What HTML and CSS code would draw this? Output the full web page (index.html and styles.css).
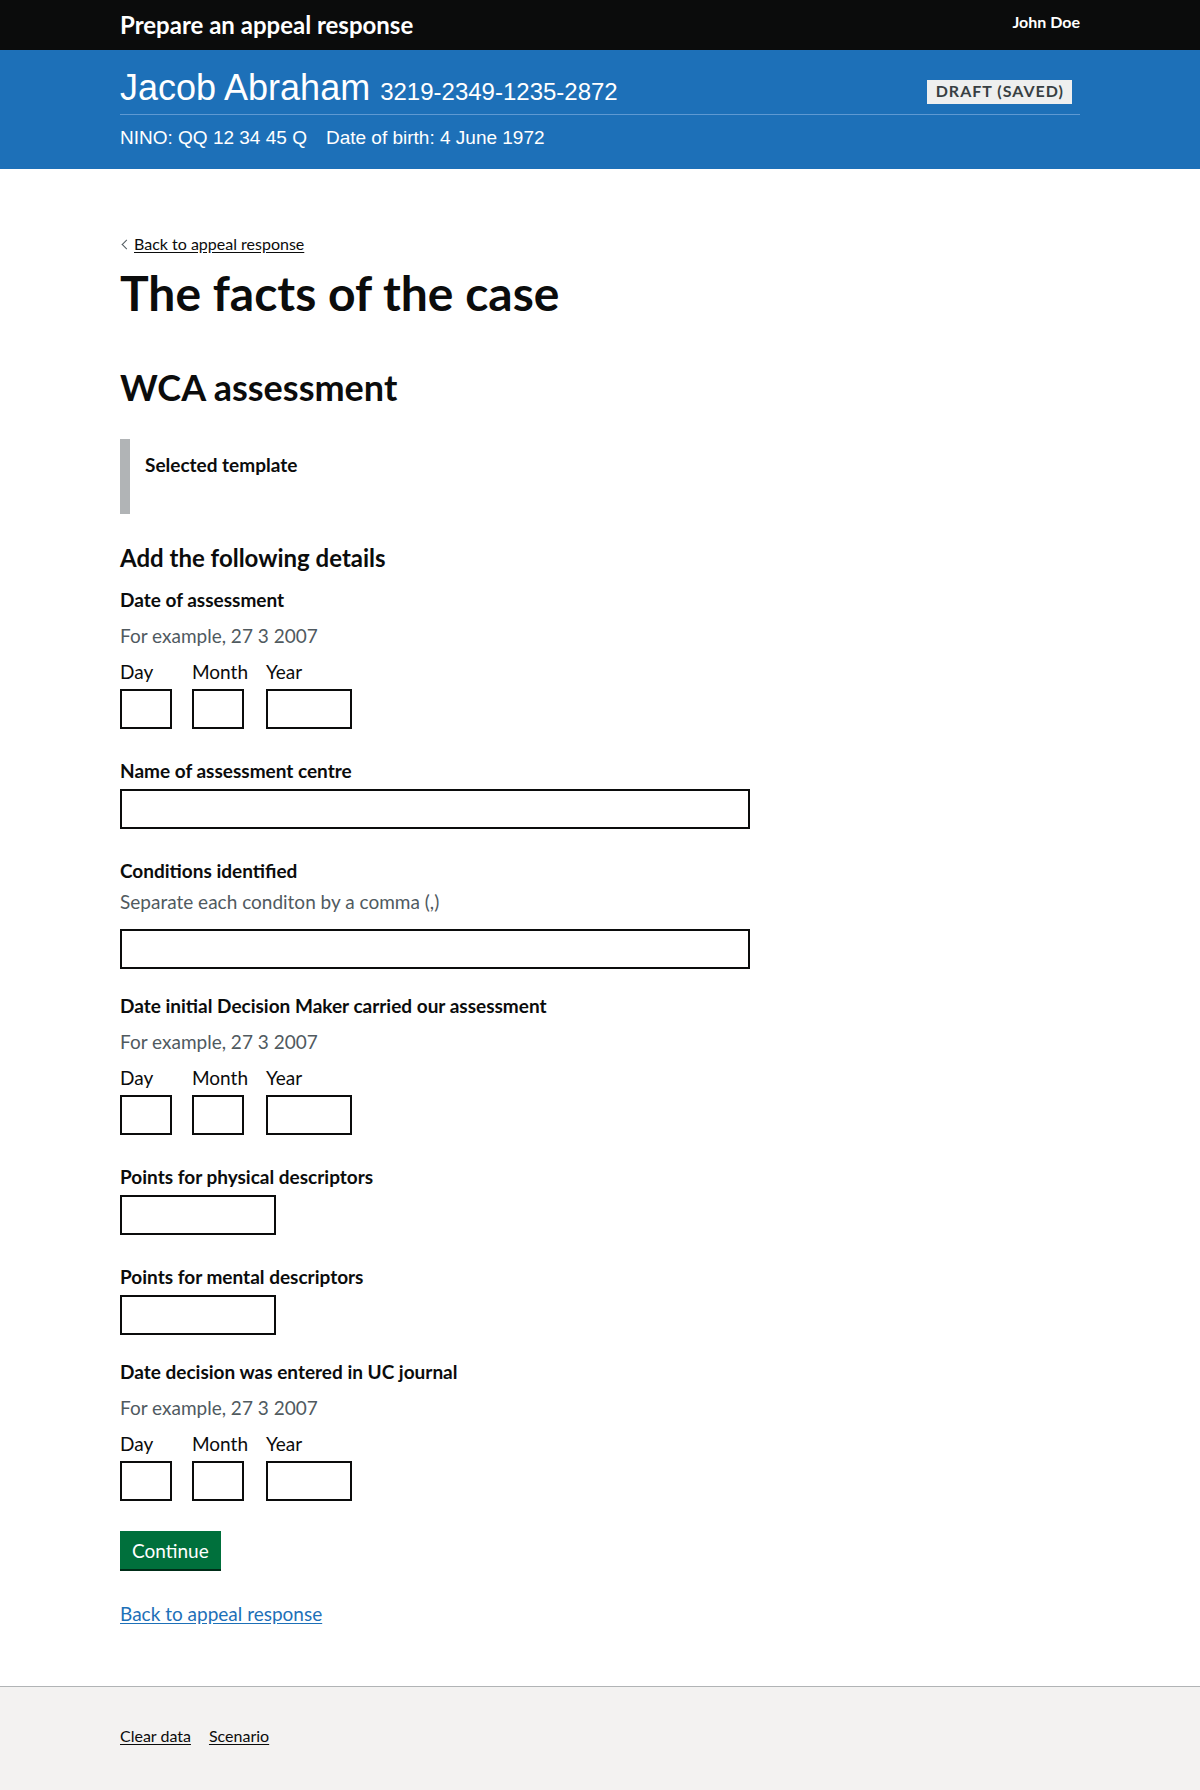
FILE: index.html
```html
<!DOCTYPE html>
<html lang="en">
<head>
<meta charset="utf-8">
<title>The facts of the case - Prepare an appeal response</title>
<link rel="stylesheet" href="styles.css">
</head>
<body>
<header class="site-header">
  <div class="container header-inner">
    <a class="service-name" href="#">Prepare an appeal response</a>
    <span class="user-name">John Doe</span>
  </div>
</header>

<div class="case-banner">
  <div class="container">
    <div class="case-top">
      <p class="claimant"><span class="claimant-name">Jacob Abraham</span> <span class="claimant-ref">3219-2349-1235-2872</span></p>
      <strong class="tag">Draft (saved)</strong>
    </div>
    <div class="case-meta">
      <span class="meta-item">NINO: QQ 12 34 45 Q</span>
      <span class="meta-item">Date of birth: 4 June 1972</span>
    </div>
  </div>
</div>

<main class="container main">
  <div class="back-wrap"><a class="back-link" href="#">Back to appeal response</a></div>
  <h1 class="heading-xl">The facts of the case</h1>
  <h2 class="heading-l">WCA assessment</h2>

  <div class="inset">
    <h3 class="heading-s">Selected template</h3>
  </div>

  <h2 class="heading-m">Add the following details</h2>

  <form class="form" action="#">
    <div class="form-group">
      <div class="legend">Date of assessment</div>
      <div class="hint hint--date">For example, 27 3 2007</div>
      <div class="date-input">
        <div class="date-item date-item--day"><label class="date-label">Day</label><input class="input input--day" type="text"></div>
        <div class="date-item date-item--month"><label class="date-label">Month</label><input class="input input--day" type="text"></div>
        <div class="date-item date-item--year"><label class="date-label">Year</label><input class="input input--year" type="text"></div>
      </div>
    </div>

    <div class="form-group">
      <label class="label">Name of assessment centre</label>
      <input class="input input--wide" type="text">
    </div>

    <div class="form-group">
      <label class="label">Conditions identified</label>
      <div class="hint">Separate each conditon by a comma (,)</div>
      <input class="input input--wide" type="text">
    </div>

    <div class="form-group">
      <div class="legend">Date initial Decision Maker carried our assessment</div>
      <div class="hint hint--date">For example, 27 3 2007</div>
      <div class="date-input">
        <div class="date-item date-item--day"><label class="date-label">Day</label><input class="input input--day" type="text"></div>
        <div class="date-item date-item--month"><label class="date-label">Month</label><input class="input input--day" type="text"></div>
        <div class="date-item date-item--year"><label class="date-label">Year</label><input class="input input--year" type="text"></div>
      </div>
    </div>

    <div class="form-group">
      <label class="label">Points for physical descriptors</label>
      <input class="input input--points" type="text">
    </div>

    <div class="form-group">
      <label class="label">Points for mental descriptors</label>
      <input class="input input--points" type="text">
    </div>

    <div class="form-group">
      <div class="legend">Date decision was entered in UC journal</div>
      <div class="hint hint--date">For example, 27 3 2007</div>
      <div class="date-input">
        <div class="date-item date-item--day"><label class="date-label">Day</label><input class="input input--day" type="text"></div>
        <div class="date-item date-item--month"><label class="date-label">Month</label><input class="input input--day" type="text"></div>
        <div class="date-item date-item--year"><label class="date-label">Year</label><input class="input input--year" type="text"></div>
      </div>
    </div>

    <button class="button" type="submit">Continue</button>
  </form>

  <p class="body-link"><a class="link" href="#">Back to appeal response</a></p>
</main>

<footer class="footer">
  <div class="container footer-links">
    <a class="footer-link" href="#">Clear data</a>
    <a class="footer-link" href="#">Scenario</a>
  </div>
</footer>
</body>
</html>
```

FILE: styles.css
```css
* { box-sizing: border-box; }

html, body {
  margin: 0;
  padding: 0;
}

body {
  font-family: Lato, "Liberation Sans", Arial, sans-serif;
  color: #0b0c0c;
  background: #ffffff;
}

.container {
  width: 960px;
  margin: 0 auto;
}

/* Black header */
.site-header {
  background: #0b0c0c;
  height: 50px;
}
.header-inner {
  display: flex;
  align-items: center;
  justify-content: space-between;
  height: 50px;
}
.service-name {
  color: #ffffff;
  font-weight: 700;
  font-size: 24px;
  line-height: 30px;
  text-decoration: none;
}
.user-name {
  color: #ffffff;
  font-weight: 700;
  font-size: 16px;
  line-height: 20px;
  margin-bottom: 6px;
}

/* Blue case banner */
.case-banner {
  background: #1d70b8;
  color: #ffffff;
  font-family: "Liberation Sans", Arial, sans-serif;
}
.case-top {
  display: flex;
  justify-content: space-between;
  align-items: flex-start;
  padding-top: 18px;
  padding-bottom: 6px;
  border-bottom: 1px solid #5e99d2;
}
.claimant {
  margin: 0;
  font-size: 36px;
  line-height: 40px;
  height: 40px;
}
.claimant-ref {
  font-size: 24px;
  line-height: 1;
}
.tag {
  margin-top: 12px;
  margin-right: 8px;
  background: #eeefef;
  color: #383f43;
  font-family: Lato, "Liberation Sans", Arial, sans-serif;
  font-weight: 700;
  font-size: 16px;
  line-height: 16px;
  letter-spacing: 1px;
  text-transform: uppercase;
  padding: 3px 8px 5px 9px;
}
.case-meta {
  display: flex;
  gap: 19px;
  font-size: 19px;
  line-height: 25px;
  padding-top: 10px;
  padding-bottom: 19px;
}

/* Main */
.main {
  padding-bottom: 40px;
}
.back-wrap {
  margin-top: 65px;
  height: 20px;
  margin-bottom: 14px;
}
.back-link {
  position: relative;
  display: inline-block;
  padding-left: 14px;
  font-size: 16px;
  line-height: 20px;
  color: #0b0c0c;
  text-decoration: underline;
  text-underline-offset: 2px;
}
.back-link::before {
  content: "";
  position: absolute;
  left: 3px;
  top: 7px;
  width: 6px;
  height: 6px;
  border-left: 1px solid #505a5f;
  border-bottom: 1px solid #505a5f;
  transform: rotate(45deg);
}

.heading-xl {
  margin: 0 0 49px;
  font-size: 48px;
  line-height: 50px;
  font-weight: 700;
}
.heading-l {
  margin: 0 0 32px;
  font-size: 36px;
  line-height: 40px;
  font-weight: 700;
}
.inset {
  border-left: 10px solid #b1b4b6;
  padding: 13px 15px 15px;
  margin-bottom: 29px;
}
.heading-s {
  margin: 0 0 22px;
  font-size: 19px;
  line-height: 25px;
  font-weight: 700;
}
.heading-m {
  margin: 0 0 20px;
  font-size: 24px;
  line-height: 30px;
  font-weight: 700;
}

/* Form */
.form-group {
  margin-bottom: 30px;
}
.legend {
  font-size: 19px;
  line-height: 13px;
  font-weight: 700;
  margin-bottom: 17px;
}
.label {
  display: block;
  font-size: 19px;
  line-height: 23px;
  font-weight: 700;
  margin-bottom: 7px;
}
.hint {
  font-size: 19px;
  line-height: 25px;
  color: #505a5f;
  margin-bottom: 15px;
}
.hint--date {
  margin-bottom: 11px;
}
.date-input {
  display: flex;
  gap: 20px;
}
.date-item {
  display: flex;
  flex-direction: column;
}
.date-item--day { width: 52px; }
.date-item--month { width: 54px; }
.date-item--year { width: 86px; }
.date-label {
  font-size: 19px;
  line-height: 25px;
  margin-bottom: 5px;
  white-space: nowrap;
}
.input {
  display: block;
  height: 40px;
  border: 2px solid #0b0c0c;
  border-radius: 0;
  padding: 5px;
  font-family: inherit;
  font-size: 19px;
  background: #ffffff;
  margin: 0;
}
.input--day { width: 52px; }
.input--year { width: 86px; }
.input--wide { width: 630px; }
.input--points { width: 156px; }

.button {
  display: inline-block;
  font-family: inherit;
  font-size: 19px;
  line-height: 19px;
  color: #ffffff;
  background: #00703c;
  border: 2px solid transparent;
  border-radius: 0;
  box-shadow: 0 2px 0 #002d18;
  padding: 8px 10px 7px;
  margin: 0 0 32px;
  cursor: pointer;
}

.body-link {
  margin: 0 0 20px;
  font-size: 19px;
  line-height: 25px;
}
.link {
  color: #1d70b8;
  text-decoration: underline;
  text-underline-offset: 2px;
}

/* Footer */
.footer {
  background: #f3f2f1;
  border-top: 1px solid #b1b4b6;
  padding: 39px 0 60px;
}
.footer-links {
  display: flex;
  gap: 18px;
}
.footer-link {
  color: #0b0c0c;
  font-size: 16px;
  line-height: 20px;
  text-decoration: underline;
  text-underline-offset: 2px;
}
```
